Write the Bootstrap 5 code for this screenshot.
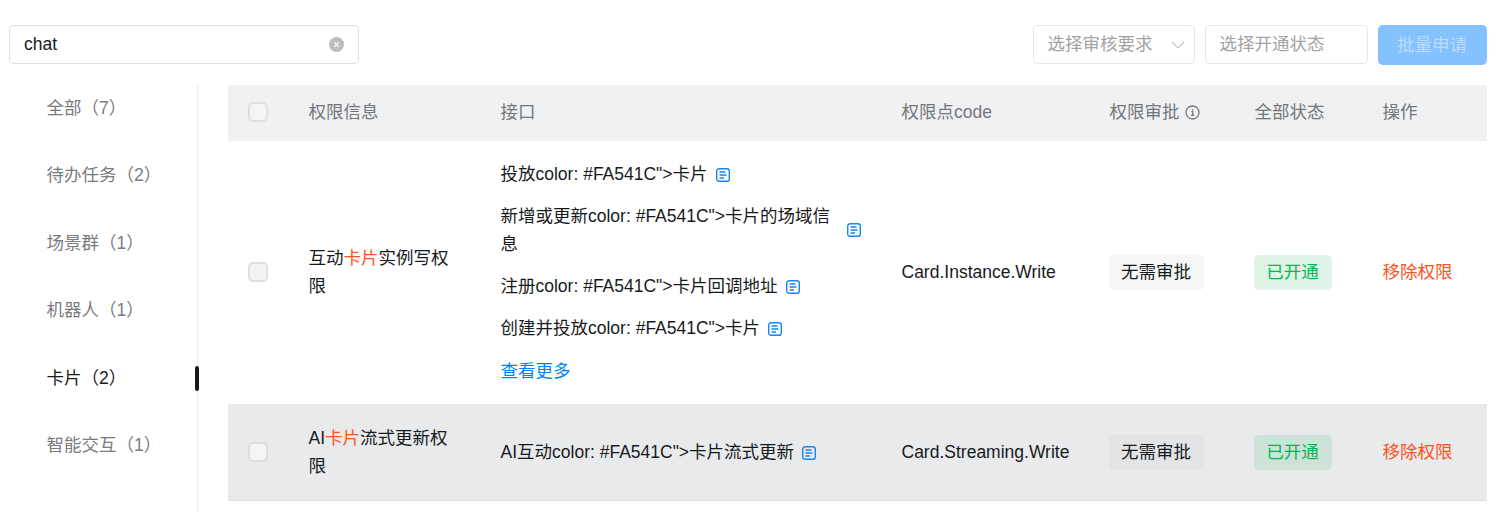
<!doctype html>
<html lang="zh"><head><meta charset="utf-8"><title>权限</title>
<link href="https://cdn.jsdelivr.net/npm/bootstrap@5.3.0/dist/css/bootstrap.min.css" rel="stylesheet">
<style>
html,body{height:512px;overflow:hidden;background:#fff}
body{font-family:"Liberation Sans","Noto Sans CJK SC",sans-serif;font-size:17.5px;line-height:28px;color:#171a1d}
.shell{padding:25px 12px 0 9px}
.topbar{height:60px}
.searchbox{width:350px;height:39px;border:1px solid #dfe0e1;border-radius:5px;padding:0 14px 1px}
.searchbox span{flex:1}
.fakesel{height:39px;border:1px solid #e5e6e7;border-radius:5px;padding:0 14px 1px 13.5px;color:#a2a3a5}
.sel-a{width:162px}.sel-b{width:163px}
.chevron{margin-right:-5px;margin-top:1px}
.applybtn{width:109px;height:40px;background:#85c1ff;border:0;border-radius:5px;color:#b9dcff;font-size:17.5px;padding:0 1px 1px 0}
.toolset{column-gap:10px}
.sidemenu{width:189px;height:427px;border-right:1px solid #ebeced;padding:0;margin:0 30px 0 0;list-style:none;flex:none}
.sidemenu li{height:67.5px;padding:8.5px 0 0 37.5px;color:#7a7c7f;position:relative}
.sidemenu li.on{color:#171a1d}
.sidemenu li.on::after{content:"";position:absolute;right:-2px;top:11px;width:4px;height:25px;border-radius:2px;background:#171a1d}
.permtable{table-layout:fixed;width:1259px;margin:0;--bs-table-bg:transparent;--bs-table-color:#171a1d}
.permtable>*>tr>*{padding:0 19.5px 0 20.5px;border:0;vertical-align:middle}
.permtable thead th{height:56px;padding-bottom:2px;background:#f0f1f3;color:#747679;font-weight:400}
.permtable .row-a td{height:263px;padding-bottom:1px;border-bottom:0}
.permtable .row-b td{height:96px;padding-top:1px;background:#e9eaec;border-bottom:1px solid #dcdde0}
.hit{color:#fa541c}
.permtable .boxcell{padding-left:20px;padding-right:0}
.tickbox{display:block;width:20px;height:20px;border:2px solid #dfe0e1;border-radius:5px;background:#fff}
thead .tickbox{background:#f5f5f6}
.row-a .tickbox{background:#f3f3f4}
.row-b .tickbox{background:#f4f4f5;border-color:#dcdde0}
.apilist{display:flex;flex-direction:column;gap:14.25px}
.apiline{display:flex;align-items:center;gap:8px}
.apiline svg,.infoicon{flex:none}
.apiline svg{margin-top:2px}
.infoicon{margin-left:5.5px}
.wide-line span{width:330px}
.wide-line svg{margin-left:8px;margin-top:1px}
.morelink{color:#007fff;text-decoration:none}
.pill{display:inline-block;height:35px;line-height:35px;border-radius:5px;text-align:center;margin-left:-1px}
.pill-gray{width:95px;background:#f5f6f6}
.pill-green{width:78px;background:#e0f3e7;color:#00b853}
.row-b .pill-gray{background:#e3e4e6}
.row-b .pill-green{background:#cde3d8}
.removelink{color:#fa541c;text-decoration:none}
</style></head>
<body>
<div class="shell">
 <div class="topbar d-flex align-items-start justify-content-between">
  <div class="searchbox d-flex align-items-center"><span>chat</span>
   <svg width="15" height="15" viewBox="0 0 15 15"><circle cx="7.5" cy="7.5" r="7.5" fill="#bcbdbe"/><path d="M5.2 5.2l4.6 4.6M9.8 5.2l-4.6 4.6" stroke="#fff" stroke-width="1.2"/></svg></div>
  <div class="toolset d-flex align-items-start">
   <div class="fakesel sel-a d-flex align-items-center justify-content-between"><span>选择审核要求</span>
    <svg class="chevron" width="14" height="8" viewBox="0 0 14 8"><path d="M1 1l6 6 6-6" fill="none" stroke="#c4c5c6" stroke-width="1.1"/></svg></div>
   <div class="fakesel sel-b d-flex align-items-center">选择开通状态</div>
   <button class="applybtn" type="button" disabled>批量申请</button>
  </div>
 </div>
 <div class="d-flex align-items-start">
  <ul class="sidemenu">
   <li>全部（7）</li><li>待办任务（2）</li><li>场景群（1）</li><li>机器人（1）</li><li class="on">卡片（2）</li><li>智能交互（1）</li>
  </ul>
  <table class="table permtable">
   <colgroup><col style="width:60px"><col style="width:192px"><col style="width:401px"><col style="width:208px"><col style="width:145px"><col style="width:128px"><col style="width:125px"></colgroup>
   <thead><tr>
    <th class="boxcell"><span class="tickbox"></span></th><th>权限信息</th><th>接口</th><th>权限点code</th>
    <th><span class="d-inline-flex align-items-center">权限审批<svg class="infoicon" width="15" height="15" viewBox="0 0 15 15"><circle cx="7.5" cy="7.5" r="6.5" fill="none" stroke="#747679" stroke-width="1.3"/><path d="M6.3 6.6h1.5v3.6M6 10.4h3.2M7.5 4.1v1.3" fill="none" stroke="#747679" stroke-width="1.3"/></svg></span></th>
    <th>全部状态</th><th>操作</th></tr></thead>
   <tbody>
    <tr class="row-a">
     <td class="boxcell"><span class="tickbox"></span></td>
     <td>互动<span class="hit">卡片</span>实例写权限</td>
     <td><div class="apilist">
      <div class="apiline"><span>投放color: #FA541C"&gt;卡片</span><svg width="14" height="14" viewBox="0 0 14 14"><rect x=".7" y=".7" width="12.6" height="12.6" rx="2.4" fill="none" stroke="#1a84f5" stroke-width="1.4"/><path d="M3.5 4h6M3.5 7h7M3.5 10h4.5" stroke="#1a84f5" stroke-width="1.3"/></svg></div>
      <div class="apiline wide-line"><span>新增或更新color: #FA541C"&gt;卡片的场域信息</span><svg width="14" height="14" viewBox="0 0 14 14"><rect x=".7" y=".7" width="12.6" height="12.6" rx="2.4" fill="none" stroke="#1a84f5" stroke-width="1.4"/><path d="M3.5 4h6M3.5 7h7M3.5 10h4.5" stroke="#1a84f5" stroke-width="1.3"/></svg></div>
      <div class="apiline"><span>注册color: #FA541C"&gt;卡片回调地址</span><svg width="14" height="14" viewBox="0 0 14 14"><rect x=".7" y=".7" width="12.6" height="12.6" rx="2.4" fill="none" stroke="#1a84f5" stroke-width="1.4"/><path d="M3.5 4h6M3.5 7h7M3.5 10h4.5" stroke="#1a84f5" stroke-width="1.3"/></svg></div>
      <div class="apiline"><span>创建并投放color: #FA541C"&gt;卡片</span><svg width="14" height="14" viewBox="0 0 14 14"><rect x=".7" y=".7" width="12.6" height="12.6" rx="2.4" fill="none" stroke="#1a84f5" stroke-width="1.4"/><path d="M3.5 4h6M3.5 7h7M3.5 10h4.5" stroke="#1a84f5" stroke-width="1.3"/></svg></div>
      <div><a class="morelink" href="#">查看更多</a></div>
     </div></td>
     <td>Card.Instance.Write</td>
     <td><span class="pill pill-gray">无需审批</span></td>
     <td><span class="pill pill-green">已开通</span></td>
     <td><a class="removelink" href="#">移除权限</a></td>
    </tr>
    <tr class="row-b">
     <td class="boxcell"><span class="tickbox"></span></td>
     <td>AI<span class="hit">卡片</span>流式更新权限</td>
     <td><div class="apiline"><span>AI互动color: #FA541C"&gt;卡片流式更新</span><svg width="14" height="14" viewBox="0 0 14 14"><rect x=".7" y=".7" width="12.6" height="12.6" rx="2.4" fill="none" stroke="#1a84f5" stroke-width="1.4"/><path d="M3.5 4h6M3.5 7h7M3.5 10h4.5" stroke="#1a84f5" stroke-width="1.3"/></svg></div></td>
     <td>Card.Streaming.Write</td>
     <td><span class="pill pill-gray">无需审批</span></td>
     <td><span class="pill pill-green">已开通</span></td>
     <td><a class="removelink" href="#">移除权限</a></td>
    </tr>
   </tbody>
  </table>
 </div>
</div>
<script src="https://cdn.jsdelivr.net/npm/bootstrap@5.3.0/dist/js/bootstrap.bundle.min.js"></script>
</body></html>
